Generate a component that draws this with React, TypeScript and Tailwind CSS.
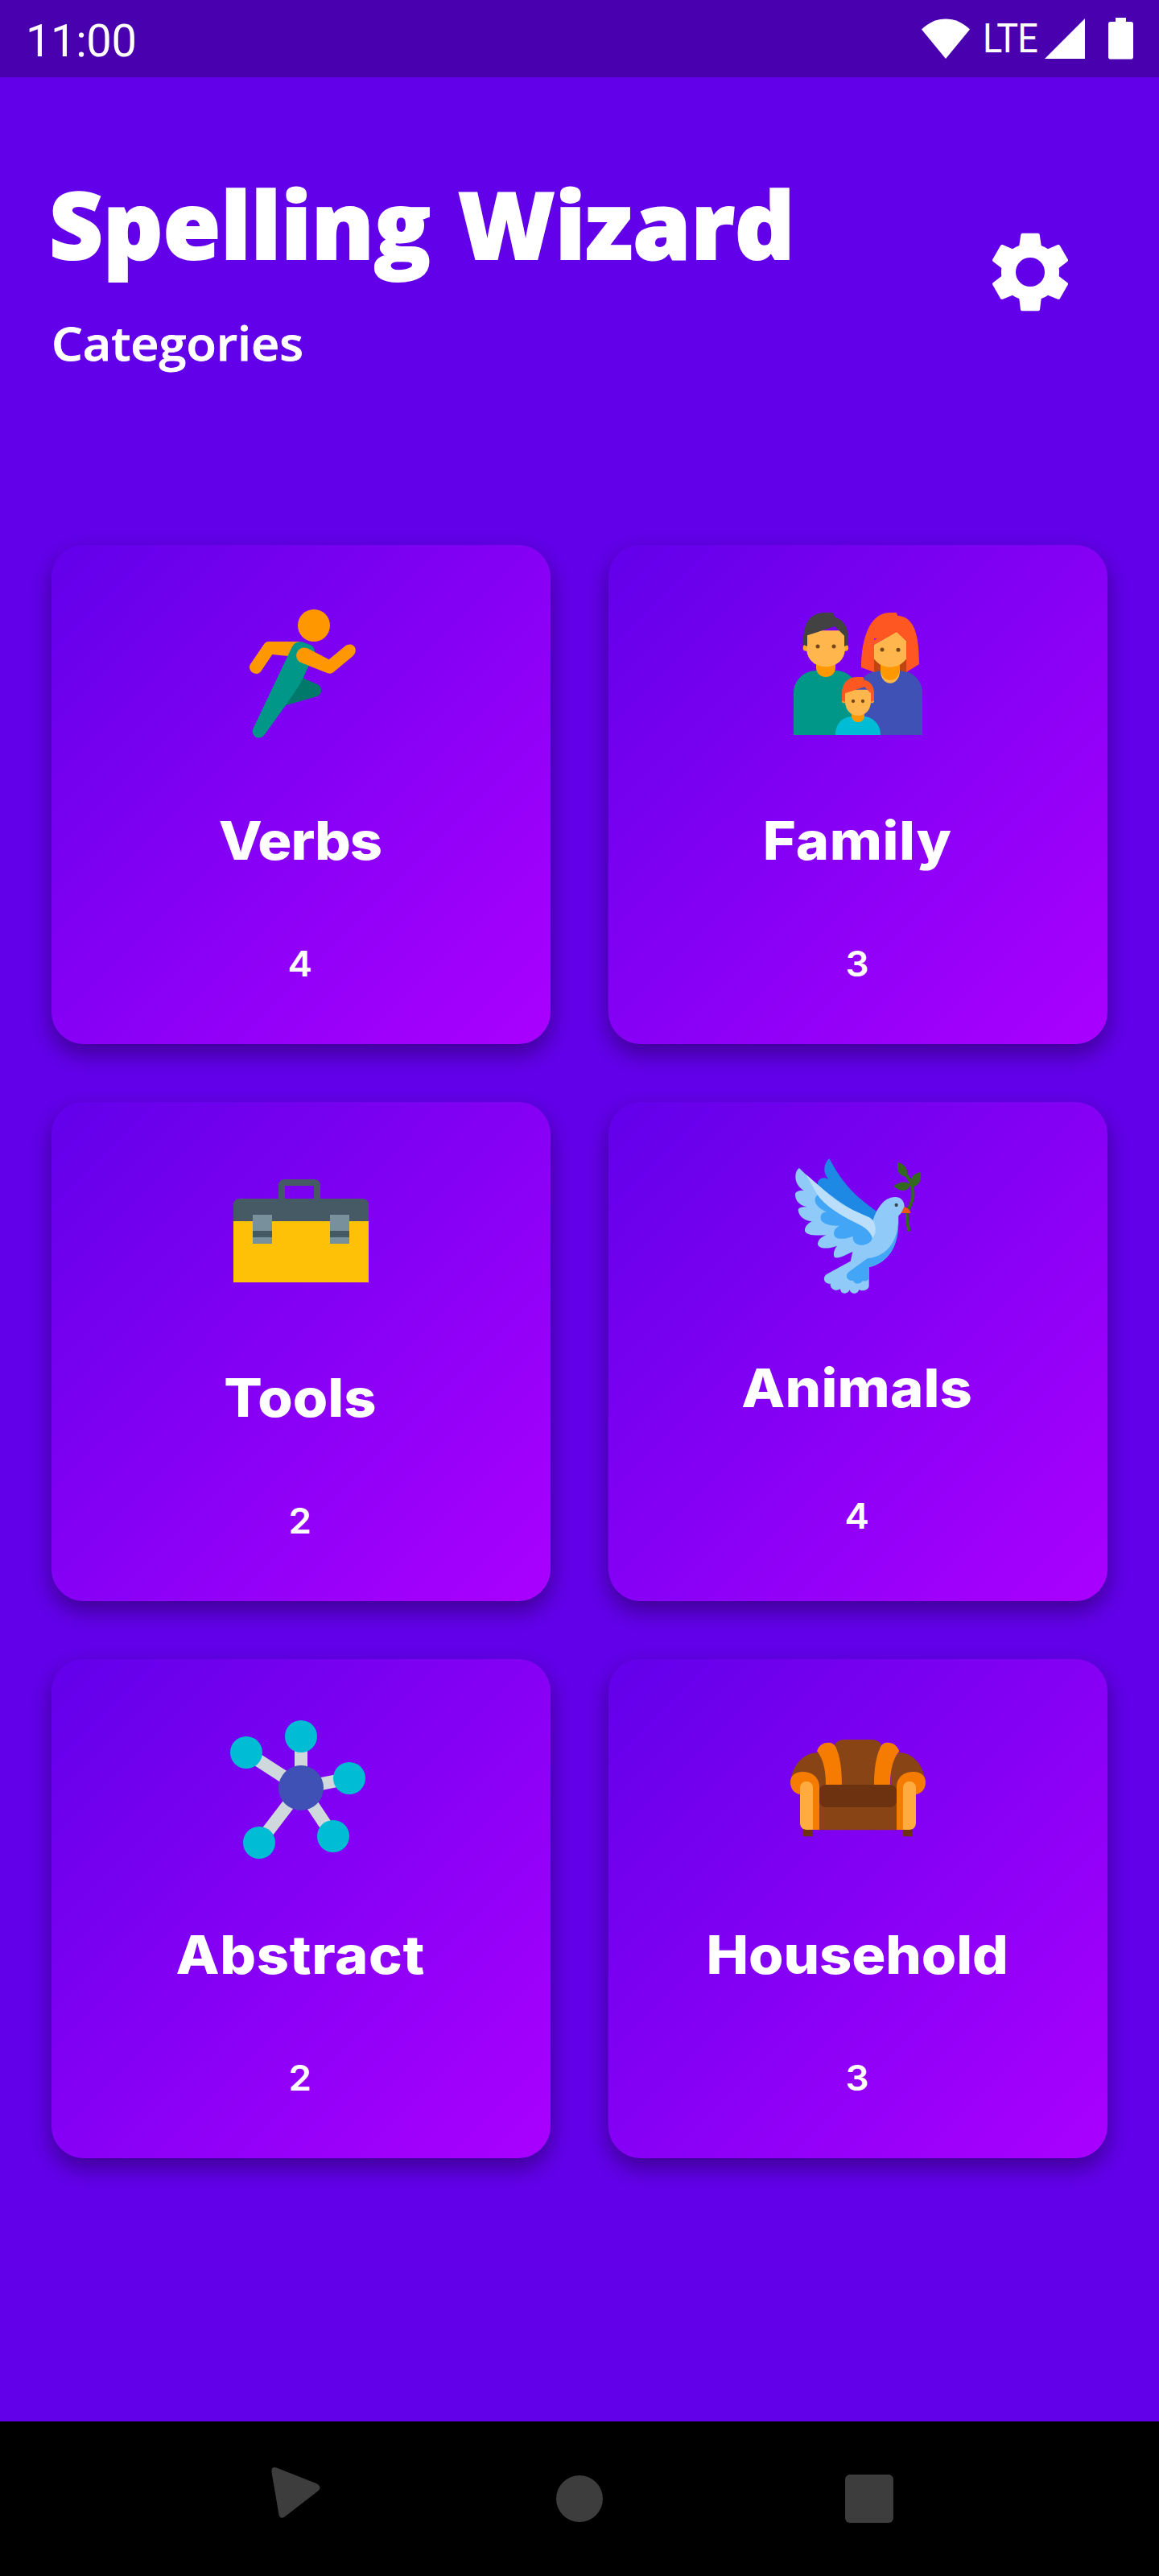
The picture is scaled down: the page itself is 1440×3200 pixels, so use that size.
import React from 'react';

function RunnerIcon() {
  return (
    <svg className="size-48" viewBox="24 33 576 576">
      <circle cx="360" cy="141" r="60" fill="#ff9800" />
      <path fill="#00796b" d="M318 337L374 361C392 370 391 399 372 405L255 439L270 360Z" />
      <path fill="#ff9800" d="M310 201H190Q179 202 173 212L125 283C106 308 147 337 164 310L205 249L285 257Z" />
      <path fill="#009688" d="M278 222Q289 198 316 202L348 214Q364 224 363 240L320 337Q308 363 255 438L177 547C156 575 122 552 134 524Z" />
      <path fill="#ff9800" d="M336 226L416 268L475 219C506 196 530 233 505 255L432 316Q423 323 411 319L311 279C277 260 301 211 336 226Z" />
    </svg>
  );
}

function FamilyIcon() {
  return (
    <svg className="size-48" viewBox="60 33 576 576">
      <path fill="#009688" d="M108 549V392C108 347 146 309 191 309H266C294 309 325 327 341 353V549Z" />
      <path fill="#bf4510" d="M408 240H528V330H408Z" />
      <path fill="#3f51b5" d="M340 549V380C355 338 390 309 431 309H504C550 309 588 346 588 392V549Z" />
      <path fill="#ff9800" d="M192 270H264V297C264 345 192 345 192 297Z" />
      <ellipse cx="153" cy="224" rx="10" ry="12" fill="#ffa726" />
      <ellipse cx="302" cy="224" rx="10" ry="12" fill="#ffa726" />
      <path fill="#ffb74d" d="M156 160H300V225C300 318 156 318 156 225Z" />
      <path fill="#424242" d="M144 212C143 150 156 93 228 93H254L262 110C298 119 312 153 312 190V212L297 219V179L262 144L159 178V219Z" />
      <circle cx="198" cy="219" r="7.5" fill="#784719" />
      <circle cx="258" cy="219" r="7.5" fill="#784719" />
      <path fill="#ff5722" d="M360 297C360 207 384 93 468 93H491L496 105C555 107 576 170 576 285L528 315V190H408V315Z" />
      <path fill="#bf4510" d="M408 255L438 285V309H431L408 315Z" />
      <path fill="#bf4510" d="M528 255L498 285V309H504L528 315Z" />
      <path fill="#ffb74d" d="M432 290H504V309C504 372 432 372 432 309Z" />
      <path fill="#ff9800" d="M432 280H504V300C504 360 432 360 432 300Z" />
      <path fill="#ffb74d" d="M408 212L492 165L528 198V265C500 307 436 307 408 265Z" />
      <path fill="#ff5722" d="M400 218V200L492 150L535 190V206L528 199L492 165L408 213Z" />
      <circle cx="438" cy="231" r="7.5" fill="#784719" />
      <circle cx="498" cy="232" r="7.5" fill="#784719" />
      <path fill="#00bcd4" d="M264 549C264 505 291 480 330 480H367C404 480 432 510 432 549Z" />
      <path fill="#ff9800" d="M324 460H372V478C372 509 324 509 324 478Z" />
      <ellipse cx="296" cy="423" rx="8" ry="7" fill="#ffa726" />
      <ellipse cx="400" cy="423" rx="8" ry="7" fill="#ffa726" />
      <path fill="#ffb74d" d="M300 380H396V423C396 495 300 495 300 423Z" />
      <path fill="#ff5722" d="M288 421V396C288 355 311 333 345 333H367L372 345C398 348 408 372 408 393V421L396 426V394L372 370L300 394V426Z" />
      <circle cx="330" cy="423" r="6.5" fill="#784719" />
      <circle cx="366" cy="423" r="6.5" fill="#784719" />
    </svg>
  );
}

function ToolboxIcon() {
  return (
    <svg className="size-48" viewBox="24 9 576 576">
      <path fill="#ffc107" d="M60 261H564V489H60Z" />
      <path
        fill="#455a64"
        fillRule="evenodd"
        d="M60 261V201Q60 177 84 177H228V129Q228 105 252 105H360Q384 105 384 129V177H540Q564 177 564 201V261ZM252 129V177H360V129Z"
      />
      <path fill="#78909c" d="M132 237H204V345H132ZM420 237H492V345H420Z" />
      <path fill="#455a64" d="M132 297H204V321H132ZM420 297H492V321H420Z" />
    </svg>
  );
}

function DoveIcon() {
  return (
    <svg className="size-48" viewBox="30 39 576 576">
      <path fill="#1e88e5" d="M211 57C191 76 184 108 208 134C192 126 173 130 168 146V190L350 290L380 290L390 256C318 205 265 160 211 57Z" />
      <path
        fill="#90caf9"
        d="M99 93C78 107 78 156 116 176C94 176 84 182 84 191C84 218 104 232 128 238C108 237 96 241 95 250C98 276 121 290 146 292C128 301 118 314 120 328C129 347 163 344 200 343C181 349 168 362 168 377C174 396 205 395 240 383C228 396 224 416 231 426C247 432 271 417 298 405L290 440L202 488C181 503 195 526 215 524C213 545 238 555 252 543C253 564 279 566 287 547C291 565 318 565 322 546C336 554 359 548 359 531V463C430 445 469 389 469 271C477 263 491 250 491 236C491 215 477 201 457 201C410 201 386 252 374 287C270 245 166 160 99 93Z"
      />
      <path fill="#42a5f5" d="M174 190C150 198 147 233 201 256C182 257 176 272 180 286C190 305 224 310 250 308C229 318 224 335 231 347C242 361 275 358 299 347C297 372 316 382 334 380C353 378 374 367 371 347L355 310L240 250Z" />
      <path fill="#bbdefb" d="M124 116L180 165C265 245 300 247 360 277C386 292 384 320 382 336L373 355C360 322 338 311 308 296C245 266 191 230 165 190Z" />
      <path fill="#42a5f5" d="M469 285C466 362 432 406 387 422Q372 427 353 430L285 479C266 493 279 516 300 512C306 530 330 525 335 513Q350 518 358 506V463C440 441 471 379 469 285Z" />
      <path d="M499 120C540 180 520 218 506 247M500 258C501 290 503 308 509 328" fill="none" stroke="#33691e" strokeWidth="12" />
      <path d="M506 242Q499 252 499 264" fill="none" stroke="#33691e" strokeWidth="11" />
      <path fill="#33691e" d="M466 71C460 105 473 123 500 125C508 99 492 77 466 71ZM451 160C475 140 507 141 512 159C504 182 474 183 451 160ZM551 107C519 115 507 136 520 163C546 160 557 136 551 107Z" />
      <path fill="#f4511e" d="M490 237Q510 243 515 261H479Z" />
      <circle cx="461" cy="231" r="6.5" fill="#37474f" />
    </svg>
  );
}

function NetworkIcon() {
  return (
    <svg className="size-48" viewBox="24 45 576 576">
      <path
        d="M312 333V141M312 333L108 201M312 333L492 297M312 333L156 537M312 333L432 513"
        stroke="#cfd8dc"
        strokeWidth="48"
      />
      <circle cx="312" cy="333" r="84" fill="#3f51b5" />
      <g fill="#00bcd4">
        <circle cx="312" cy="141" r="60" />
        <circle cx="108" cy="201" r="60" />
        <circle cx="492" cy="297" r="60" />
        <circle cx="156" cy="537" r="60" />
        <circle cx="432" cy="513" r="60" />
      </g>
    </svg>
  );
}

function SofaIcon() {
  return (
    <svg className="size-48" viewBox="30 -15 576 576">
      <path fill="#6d3310" d="M114 425H150V454H114ZM486 425H522V454H486Z" />
      <path fill="#884415" d="M233 108C243 98 253 93 266 93H370C383 93 393 98 403 108L395 280H240Z" />
      <path fill="#884415" d="M67 250C74 184 118 141 170 141L200 180V280H150ZM569 250C562 184 520 141 470 141L440 180V280H486Z" />
      <path fill="#884415" d="M160 330H474V430H160Z" />
      <path fill="#f57c00" d="M165 136C171 116 187 104 207 104C220 104 231 110 235 120C252 158 258 205 258 262H198C198 205 188 164 165 136ZM472 136C465 116 449 104 429 104C416 104 406 110 402 120C384 158 378 205 378 262H438C438 205 449 164 472 136Z" />
      <path fill="#f57c00" d="M66 252C66 228 84 213 110 213C149 213 174 234 174 270V429H126L102 300L102 297C81 294 66 276 66 252ZM570 252C570 228 552 213 526 213C487 213 462 234 462 270V429H510L534 300L534 297C555 294 570 276 570 252Z" />
      <path fill="#ffab40" d="M102 273C102 241 150 241 150 273V429H126Q103 427 102 405ZM486 273C486 241 534 241 534 273V405Q533 427 510 429H486Z" />
      <rect x="174" y="261" width="288" height="84" rx="24" fill="#6d3310" />
    </svg>
  );
}

function GearIcon() {
  return (
    <svg className="size-[100px]" viewBox="60 54 300 300">
      <path
        fill="#fff"
        fillRule="evenodd"
        d="M181 59H239Q244 59 245 64L251 105Q265 110 276 118L313 102Q318 101 321 106L351 158Q352 161 349 164L317 189Q319 204 317 219L349 244Q352 247 351 250L321 302Q318 307 313 305L276 290Q265 299 251 303L246 344Q244 349 239 349H181Q175 349 174 344L169 303Q155 299 144 290L107 305Q102 307 99 302L69 250Q68 247 71 244L103 219Q101 204 103 189L71 164Q68 161 69 158L99 106Q102 101 107 102L144 118Q155 110 169 105L175 64Q176 59 181 59ZM210 150A54 54 0 1 0 210 258A54 54 0 1 0 210 150Z"
      />
    </svg>
  );
}

type Category = {
  name: string;
  count: number;
  icon: () => React.ReactElement;
  tracking: string;
  raised?: boolean;
};

const categories: Category[] = [
  { name: 'Verbs', count: 4, icon: RunnerIcon, tracking: 'tracking-[-1px]' },
  { name: 'Family', count: 3, icon: FamilyIcon, tracking: 'tracking-[0.6px]' },
  { name: 'Tools', count: 2, icon: ToolboxIcon, tracking: 'tracking-[0px]' },
  { name: 'Animals', count: 4, icon: DoveIcon, tracking: 'tracking-[0.2px]', raised: true },
  { name: 'Abstract', count: 2, icon: NetworkIcon, tracking: 'tracking-[0.6px]' },
  { name: 'Household', count: 3, icon: SofaIcon, tracking: 'tracking-[-0.1px]' },
];

function CategoryCard({ name, count, icon: Icon, tracking, raised }: Category) {
  return (
    <div className="flex h-[620px] w-[620px] flex-col items-center rounded-[40px] bg-linear-to-br/srgb from-[#6200ea] to-[#aa00ff] pt-16 shadow-[0_12px_28px_rgba(0,0,0,0.38)]">
      <Icon />
      <div
        className={`mr-[2px] scale-x-[1.065] text-[66px] leading-[80px] font-extrabold ${tracking} ${raised ? 'mt-[59px]' : 'mt-[71px]'}`}
      >
        {name}
      </div>
      <div
        className={`mr-[3px] scale-x-[1.04] text-[44px] leading-[56px] font-semibold ${raised ? 'mt-[91px]' : 'mt-[85px]'}`}
      >
        {count}
      </div>
    </div>
  );
}

function StatusBar() {
  return (
    <div className="flex h-24 items-start justify-between bg-[#4900af] pr-8 pl-8 font-[Roboto,sans-serif]">
      <div className="pt-[18px] text-[56px] leading-[66px] tracking-[-0.4px]">11:00</div>
      <div className="flex items-start pt-[21px]">
        <svg className="h-[54px] w-[62px]" viewBox="1144 21 62 54" fill="#fff">
          <path d="M1145 36.5C1162 19 1188 19 1205 36.5L1175 73Z" />
        </svg>
        <div className="ml-[15px] w-[72px]">
          <div className="origin-left scale-x-[0.9] text-[50px] leading-[55px] tracking-[-1px]">LTE</div>
        </div>
        <svg className="ml-[4px] h-[54px] w-[52px]" viewBox="1297 21 52 54" fill="#fff">
          <path d="M1348 23V73H1298Z" />
        </svg>
        <svg className="ml-[28px] h-[54px] w-[31px]" viewBox="1377 21 31 54" fill="#fff">
          <path d="M1386 22H1399V27H1405Q1408 27 1408 30V70.5Q1408 73.6 1405 73.6H1380Q1377 73.6 1377 70.5V30Q1377 27 1380 27H1386Z" />
        </svg>
      </div>
    </div>
  );
}

function NavBar() {
  return (
    <div className="flex h-48 items-start bg-black text-[#3d3d3d]">
      <svg className="mt-[54px] ml-[334px] h-[70px] w-[66px]" viewBox="334 3062 66 70" fill="currentColor">
        <path d="M343.5 3065.5L393 3085Q402 3090 393 3096L353 3127Q348 3129.500 346.500 3124L337.500 3071Q337 3063 343.500 3065.500Z" />
      </svg>
      <div className="mt-[67px] ml-[291px] size-[58px] rounded-full bg-current" />
      <div className="mt-[66px] ml-[301px] size-[60px] rounded-[6px] bg-current" />
    </div>
  );
}

export default function App() {
  return (
    <div className="flex h-[3200px] w-[1440px] flex-col bg-[#6200ea] font-[Inter,sans-serif] text-white">
      <StatusBar />
      <header className="flex h-[581px] items-start justify-between pr-[110px] pl-[60px] font-['Open_Sans',sans-serif]">
        <div className="pt-[111px]">
          <h1 className="ml-px text-[116px] leading-[140px] font-extrabold whitespace-nowrap [-webkit-text-stroke:2px_white] [word-spacing:4px]">
            Spelling Wizard
          </h1>
          <h2 className="mt-[45px] ml-[4px] origin-left scale-x-[1.072] text-[57px] leading-[68px] font-semibold [-webkit-text-stroke:0.8px_white]">
            Categories
          </h2>
        </div>
        <button className="mt-[192px]" aria-label="Settings">
          <GearIcon />
        </button>
      </header>
      <main className="grid flex-1 grid-cols-[620px_620px] content-start justify-center gap-[72px]">
        {categories.map((category) => (
          <CategoryCard key={category.name} {...category} />
        ))}
      </main>
      <NavBar />
    </div>
  );
}
